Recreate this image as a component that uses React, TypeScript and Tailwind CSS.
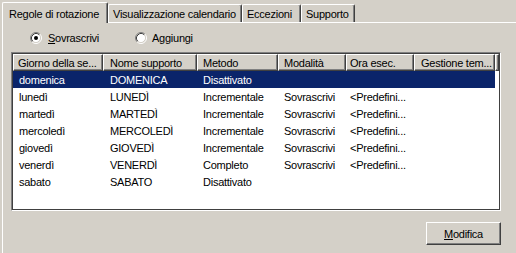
import React from 'react';

type Row = { day: string; media: string; method: string; mode: string; time: string };

const rows: Row[] = [
    { day: 'domenica', media: 'DOMENICA', method: 'Disattivato', mode: '', time: '' },
    { day: 'lunedì', media: 'LUNEDÌ', method: 'Incrementale', mode: 'Sovrascrivi', time: '<Predefini...' },
    { day: 'martedì', media: 'MARTEDÌ', method: 'Incrementale', mode: 'Sovrascrivi', time: '<Predefini...' },
    { day: 'mercoledì', media: 'MERCOLEDÌ', method: 'Incrementale', mode: 'Sovrascrivi', time: '<Predefini...' },
    { day: 'giovedì', media: 'GIOVEDÌ', method: 'Incrementale', mode: 'Sovrascrivi', time: '<Predefini...' },
    { day: 'venerdì', media: 'VENERDÌ', method: 'Completo', mode: 'Sovrascrivi', time: '<Predefini...' },
    { day: 'sabato', media: 'SABATO', method: 'Disattivato', mode: '', time: '' },
];

// column widths + text offsets (header / row) measured off the screenshot
const cols = [
    { w: 'w-[90px]', head: 'pl-[4px]', cell: 'pl-[6px]', label: 'Giorno della se...' },
    { w: 'w-[94px]', head: 'pl-[6px]', cell: 'pl-[7px]', label: 'Nome supporto' },
    { w: 'w-[81px]', head: 'pl-[5px]', cell: 'pl-[6px]', label: 'Metodo' },
    { w: 'w-[68px]', head: 'pl-[5px]', cell: 'pl-[6px]', label: 'Modalità' },
    { w: 'w-[68px]', head: 'pl-[3px]', cell: 'pl-[4px]', label: 'Ora esec.' },
    { w: 'w-[81px]', head: 'pl-[6px]', cell: 'pl-[6px]', label: 'Gestione tem...' },
];

const Radio: React.FC<{ checked?: boolean }> = ({ checked }) => (
    <svg width="12" height="12" viewBox="0 0 12 12" className="shrink-0">
        <circle cx="6" cy="6" r="4.5" fill="#ffffff" />
        <path d="M2.11 9.89 A5.5 5.5 0 0 1 9.89 2.11" fill="none" stroke="#808080" />
        <path d="M9.89 2.11 A5.5 5.5 0 0 1 2.11 9.89" fill="none" stroke="#ffffff" />
        <path d="M2.82 9.18 A4.5 4.5 0 0 1 9.18 2.82" fill="none" stroke="#404040" />
        <path d="M9.18 2.82 A4.5 4.5 0 0 1 2.82 9.18" fill="none" stroke="#d4d0c8" />
        {checked && <circle cx="6" cy="6" r="2" fill="#000000" />}
    </svg>
);

const Tab: React.FC<{ label: string; width: string }> = ({ label, width }) => (
    <div className={`${width} h-[18px] pl-[4px] pt-[3px] leading-[13px] whitespace-nowrap border-t border-l border-white border-r border-r-[#404040] shadow-[inset_-1px_0_0_#808080] rounded-t-[2px]`}>
        {label}
    </div>
);

export default function App() {
    return (
        <div className="w-[516px] h-[253px] overflow-hidden bg-[#d4d0c8] text-black font-['Liberation_Sans',Arial,sans-serif] text-[11px] tracking-[-0.25px] leading-[13px] select-none">
            <div className="flex items-end h-[22px] pl-[2px] relative z-10">
                <div className="w-[106px] h-[21px] -mb-px pl-[6px] pt-[5px] bg-[#d4d0c8] whitespace-nowrap border-t border-l border-white border-r border-r-[#404040] shadow-[inset_-1px_0_0_#808080] rounded-t-[2px]">
                    Regole di rotazione
                </div>
                <Tab label="Visualizzazione calendario" width="w-[134px]" />
                <Tab label="Eccezioni" width="w-[59px]" />
                <Tab label="Supporto" width="w-[54px]" />
            </div>

            <div className="ml-[2px] h-[231px] border-t border-l border-white">
                <div className="mt-[8px] h-[13px] pl-[27px] flex items-center">
                    <div className="w-[105px] flex items-center gap-[6px]">
                        <Radio checked />
                        <span className="pt-[2px]"><u>S</u>ovrascrivi</span>
                    </div>
                    <div className="flex items-center gap-[5px]">
                        <Radio />
                        <span className="pt-[2px]">Aggiungi</span>
                    </div>
                </div>

                <div className="mt-[8px] ml-[8px] w-[490px] h-[159px] border border-t-[#808080] border-l-[#808080] border-b-white border-r-white">
                    <div className="w-full h-full border border-[#404040] bg-white overflow-hidden">
                        <div className="flex h-[17px]">
                            {cols.map(c => (
                                <div key={c.label} className={`${c.w} ${c.head} shrink-0 bg-[#d4d0c8] pt-[2px] whitespace-nowrap overflow-hidden border-t border-l border-white border-r border-b border-r-[#404040] border-b-[#404040] shadow-[inset_-1px_-1px_0_#808080]`}>
                                    {c.label}
                                </div>
                            ))}
                            <div className="flex-1 bg-[#d4d0c8] border-t border-l border-white border-r border-b border-r-[#404040] border-b-[#404040] shadow-[inset_-1px_-1px_0_#808080]" />
                        </div>
                        {rows.map((r, i) => {
                            const vals = [r.day, r.media, r.method, r.mode, r.time, ''];
                            return (
                                <div key={r.day} className={`flex w-[482px] h-[17px] pt-[3px] ${i === 0 ? 'bg-[#0a246a] text-white' : ''}`}>
                                    {cols.map((c, j) => (
                                        <div key={j} className={`${c.w} ${c.cell} shrink-0 whitespace-nowrap overflow-hidden`}>
                                            {vals[j]}
                                        </div>
                                    ))}
                                </div>
                            );
                        })}
                    </div>
                </div>

                <div className="mt-[11px] ml-[8px] w-[490px] flex justify-end">
                    <button className="w-[75px] h-[23px] pt-[1px] flex items-center justify-center bg-[#d4d0c8] border-t border-l border-white border-r border-b border-r-[#404040] border-b-[#404040] shadow-[inset_-1px_-1px_0_#808080]">
                        <span><u>M</u>odifica</span>
                    </button>
                </div>
            </div>
        </div>
    );
}
